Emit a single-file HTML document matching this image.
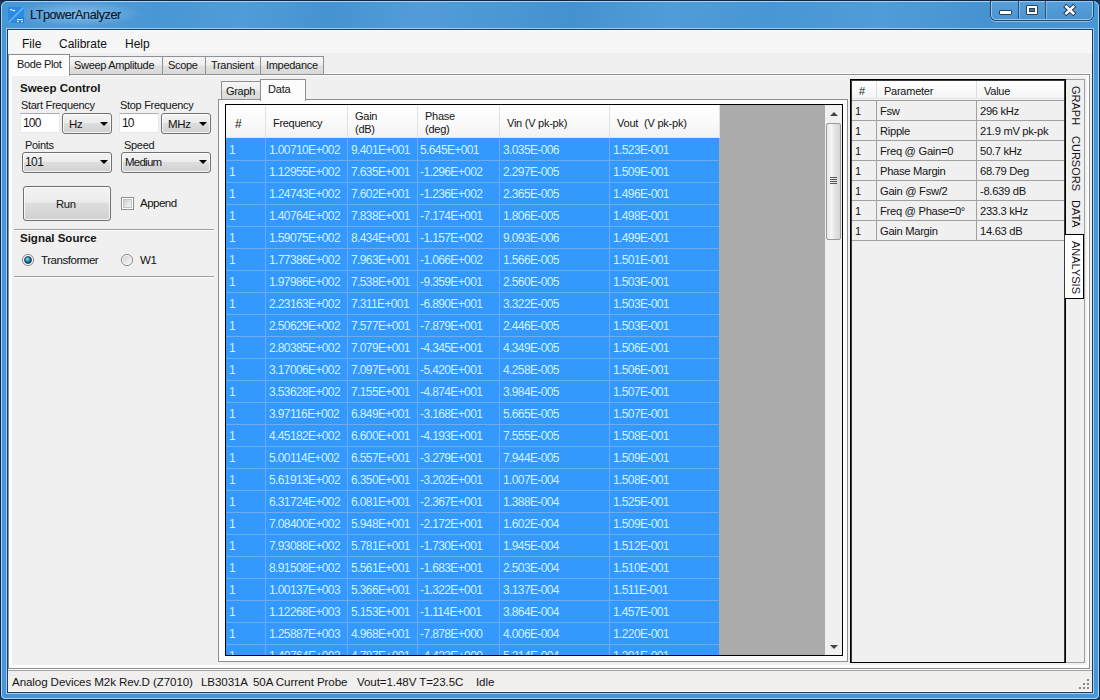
<!DOCTYPE html>
<html><head><meta charset="utf-8">
<style>
*{box-sizing:border-box;margin:0;padding:0}
html,body{width:1100px;height:700px;overflow:hidden;background:#1d4166}
body{position:relative;font-family:"Liberation Sans",sans-serif;font-size:12px;color:#000}
.a{position:absolute}
.t{position:absolute;white-space:pre;line-height:1}
.tab{border:1px solid #8d9097;border-bottom:none;background:linear-gradient(#f6f6f6 0,#eeeeee 45%,#e0e0e0 55%,#d9d9d9 100%)}
.ui{font-size:11px;letter-spacing:-0.3px;color:#151515}
.bold{font-weight:bold;font-size:11.5px;color:#151515;letter-spacing:0px}
.tb{background:#fff;border:1px solid #e3e9ef;border-top-color:#abadb3}
.cb{border:1px solid #707070;border-radius:3px;background:linear-gradient(#f3f3f3 0,#ececec 45%,#dddddd 50%,#d0d0d0 100%);box-shadow:inset 0 0 0 1px rgba(255,255,255,.75)}
.arr{width:0;height:0;border-left:4px solid transparent;border-right:4px solid transparent;border-top:4px solid #000}
.hd{font-size:11px;letter-spacing:-0.25px;color:#151515}
.c{font-size:12px;letter-spacing:-0.62px;color:#cdf3ff}
.pd{font-size:11.2px;letter-spacing:-0.3px;color:#151515}
.vt{font-size:11px;color:#151515;writing-mode:vertical-rl;line-height:1}
.mi{font-size:12px;color:#111}
</style></head><body>
<div class="a " style="left:0px;top:0px;width:1100px;height:700px;background:#4896d5;border:1px solid #0c2747;border-radius:7px 7px 5px 5px"></div>
<div class="a " style="left:2px;top:2px;width:1096px;height:26px;background:linear-gradient(100deg,rgba(255,255,255,0) 0,rgba(255,255,255,.06) 8%,rgba(255,255,255,0) 14%,rgba(255,255,255,.05) 22%,rgba(0,40,90,.03) 30%,rgba(255,255,255,.06) 38%,rgba(0,40,90,.04) 52%,rgba(255,255,255,.05) 61%,rgba(255,255,255,0) 70%,rgba(255,255,255,.05) 80%,rgba(0,40,90,.03) 90%,rgba(255,255,255,0) 100%);border-radius:5px 5px 0 0"></div>
<div class="a " style="left:1px;top:1px;width:1098px;height:698px;border:1px solid #a6d2f6;border-radius:6px 6px 4px 4px"></div>
<div class="a " style="left:6px;top:28px;width:1088px;height:666px;border:1px solid #a0d0f8"></div>
<div class="a " style="left:7px;top:29px;width:1086px;height:664px;background:#f0f0f0;border:1px solid #1f3a58"></div>
<div class="a " style="left:14px;top:2px;width:130px;height:24px;background:radial-gradient(ellipse 50% 50% at 50% 50%,rgba(190,228,255,.45),rgba(190,228,255,0) 100%)"></div>
<svg class="a" style="left:8px;top:7px" width="16" height="16" viewBox="0 0 16 16">
<rect x="0" y="0" width="16" height="16" fill="#2b8be2"/>
<path d="M0.5 15.5 L15.5 0.5" stroke="#6cbaf7" stroke-width="1.3"/>
<path d="M2 3.2 q1.3 -1.2 2.6 0 t2.6 0" stroke="#d8f0ff" fill="none" stroke-width="1.1"/>
<rect x="9" y="11" width="7" height="5" fill="#1f78c8"/>
<rect x="9" y="12" width="6" height="1.2" fill="#c8f8ff"/>
<rect x="9" y="14" width="2" height="1.2" fill="#c8f8ff"/>
<rect x="13" y="14" width="2" height="1.2" fill="#c8f8ff"/>
</svg>
<div class="t " style="left:30px;top:9px;font-size:12.6px;letter-spacing:-0.42px;color:#08182a;-webkit-text-stroke:0.15px #08182a">LTpowerAnalyzer</div>
<div class="a" style="left:990px;top:0;width:104px;height:21px;border:1px solid #24476b;border-top:none;border-radius:0 0 6px 6px;background:linear-gradient(#57a0da,#4b94d0);box-shadow:0 1px 0 rgba(170,215,250,.7)">
<div class="a" style="left:0;top:1px;right:0;bottom:0;border:1px solid rgba(175,215,248,.75);border-radius:0 0 5px 5px"></div>
<div class="a" style="left:27px;top:1px;width:1px;height:18px;background:#2d5277;box-shadow:1px 0 0 rgba(175,215,248,.5)"></div>
<div class="a" style="left:54px;top:1px;width:1px;height:18px;background:#2d5277;box-shadow:1px 0 0 rgba(175,215,248,.5)"></div>
<div class="a" style="left:8px;top:10px;width:13px;height:5px;background:#fff;border:1px solid #2a4058;border-radius:1px"></div>
<div class="a" style="left:35px;top:5px;width:12px;height:10px;background:#fff;border:1px solid #2a4058;border-radius:1px"><div class="a" style="left:2px;top:2px;width:6px;height:4px;background:#4d7396;border:1px solid #2a4058"></div></div>
<svg class="a" style="left:72px;top:4px" width="14" height="12" viewBox="0 0 14 12"><path d="M3.3 2.8 L10.2 9.2 M10.2 2.8 L3.3 9.2" stroke="#203a55" stroke-width="4.4" stroke-linecap="square"/><path d="M3.3 2.8 L10.2 9.2 M10.2 2.8 L3.3 9.2" stroke="#fff" stroke-width="2.6" stroke-linecap="square"/></svg>
</div>
<div class="a " style="left:0px;top:0px;width:1100px;height:1px;background:#0c2747;border-radius:7px 7px 0 0"></div>
<div class="a " style="left:8px;top:30px;width:1084px;height:44px;background:linear-gradient(#fcfdfe 0,#fcfdfe 1px,#f5f5f5 1px,#f7f7f7 23px,#efefef 23px,#efefef 43px,#fbfbfb 43px)"></div>
<div class="t mi" style="left:22px;top:38px;">File</div>
<div class="t mi" style="left:59px;top:38px;">Calibrate</div>
<div class="t mi" style="left:125px;top:38px;">Help</div>
<div class="a " style="left:8px;top:74px;width:1082px;height:595px;border:1px solid #8e8f92;background:#fcfcfc"></div>
<div class="a tab" style="left:69px;top:56px;width:94px;height:18px;"></div>
<div class="a tab" style="left:162px;top:56px;width:44px;height:18px;"></div>
<div class="a tab" style="left:205px;top:56px;width:56px;height:18px;"></div>
<div class="a tab" style="left:260px;top:56px;width:64px;height:18px;"></div>
<div class="t ui" style="left:74px;top:60px;letter-spacing:-0.32px">Sweep Amplitude</div>
<div class="t ui" style="left:168px;top:60px;">Scope</div>
<div class="t ui" style="left:211px;top:60px;">Transient</div>
<div class="t ui" style="left:266px;top:60px;">Impedance</div>
<div class="a " style="left:8px;top:54px;width:62px;height:22px;border:1px solid #8e8f92;border-bottom:none;background:#fcfcfc"></div>
<div class="t ui" style="left:17px;top:59px;letter-spacing:-0.35px">Bode Plot</div>
<div class="a " style="left:12px;top:76px;width:1075px;height:589px;background:#f0f0f0"></div>
<div class="a " style="left:8px;top:669px;width:1084px;height:1px;background:#fcfcfc"></div>
<div class="a " style="left:8px;top:670px;width:1084px;height:1px;background:#a0a0a0"></div>
<div class="a " style="left:8px;top:671px;width:1084px;height:20px;background:#f0efed"></div>
<div class="a " style="left:8px;top:691px;width:1084px;height:1px;background:#fbfbfb"></div>
<div class="t " style="left:12px;top:676px;font-size:11.6px;letter-spacing:-0.1px;color:#151515">Analog Devices M2k Rev.D (Z7010)</div>
<div class="t " style="left:201px;top:676px;font-size:11.6px;letter-spacing:-0.1px;color:#151515">LB3031A</div>
<div class="t " style="left:253px;top:676px;font-size:11.6px;letter-spacing:-0.1px;color:#151515">50A Current Probe</div>
<div class="t " style="left:357px;top:676px;font-size:11.6px;letter-spacing:-0.1px;color:#151515">Vout=1.48V T=23.5C</div>
<div class="t " style="left:476px;top:676px;font-size:11.6px;letter-spacing:-0.1px;color:#151515">Idle</div>
<div class="a " style="left:1087px;top:679px;width:2px;height:2px;background:#8a8a8a"></div>
<div class="a " style="left:1083px;top:683px;width:2px;height:2px;background:#8a8a8a"></div>
<div class="a " style="left:1087px;top:683px;width:2px;height:2px;background:#8a8a8a"></div>
<div class="a " style="left:1079px;top:687px;width:2px;height:2px;background:#8a8a8a"></div>
<div class="a " style="left:1083px;top:687px;width:2px;height:2px;background:#8a8a8a"></div>
<div class="a " style="left:1087px;top:687px;width:2px;height:2px;background:#8a8a8a"></div>
<div class="t bold" style="left:20px;top:83px;">Sweep Control</div>
<div class="t ui" style="left:21px;top:100px;">Start Frequency</div>
<div class="t ui" style="left:120px;top:100px;">Stop Frequency</div>
<div class="a tb" style="left:20px;top:113px;width:40px;height:20px;"></div>
<div class="t " style="left:23px;top:117px;font-size:12px;letter-spacing:-0.85px;color:#151515">100</div>
<div class="a cb" style="left:62px;top:113px;width:50px;height:21px;"></div>
<div class="t " style="left:69px;top:119px;font-size:11.5px;letter-spacing:-0.3px;color:#151515">Hz</div>
<div class="a arr" style="left:100px;top:122px;width:0px;height:0px;"></div>
<div class="a tb" style="left:119px;top:113px;width:40px;height:20px;"></div>
<div class="t " style="left:122px;top:117px;font-size:12px;letter-spacing:-0.85px;color:#151515">10</div>
<div class="a cb" style="left:161px;top:113px;width:50px;height:21px;"></div>
<div class="t " style="left:168px;top:119px;font-size:11.5px;letter-spacing:-0.3px;color:#151515">MHz</div>
<div class="a arr" style="left:199px;top:122px;width:0px;height:0px;"></div>
<div class="t ui" style="left:25px;top:140px;">Points</div>
<div class="t ui" style="left:124px;top:140px;">Speed</div>
<div class="a cb" style="left:22px;top:152px;width:90px;height:21px;"></div>
<div class="t " style="left:25px;top:156px;font-size:12px;letter-spacing:-0.6px;color:#151515">101</div>
<div class="a arr" style="left:100px;top:160px;width:0px;height:0px;"></div>
<div class="a cb" style="left:121px;top:152px;width:90px;height:21px;"></div>
<div class="t " style="left:125px;top:157px;font-size:11.5px;letter-spacing:-0.75px;color:#151515">Medium</div>
<div class="a arr" style="left:199px;top:160px;width:0px;height:0px;"></div>
<div class="a cb" style="left:23px;top:186px;width:88px;height:35px;"></div>
<div class="t ui" style="left:56px;top:199px;font-size:11.3px">Run</div>
<div class="a " style="left:121px;top:197px;width:13px;height:13px;border:1px solid #8e8f8f;background:#fff"></div>
<div class="a " style="left:123px;top:199px;width:9px;height:9px;border:1px solid #c4c4c4;background:linear-gradient(135deg,#cfcfcf,#f6f6f6)"></div>
<div class="t " style="left:140px;top:198px;font-size:11.5px;letter-spacing:-0.5px;color:#111">Append</div>
<div class="a " style="left:14px;top:229px;width:200px;height:1px;background:#a0a0a0;box-shadow:0 1px 0 #fff"></div>
<div class="t bold" style="left:20px;top:233px;">Signal Source</div>
<svg class="a" style="left:21px;top:253px" width="14" height="14" viewBox="0 0 14 14"><defs><radialGradient id="rg" cx=".42" cy=".38" r=".65"><stop offset="0" stop-color="#9eeefa"/><stop offset=".45" stop-color="#2b8aa8"/><stop offset="1" stop-color="#0b3d55"/></radialGradient></defs><circle cx="7" cy="7" r="5.6" fill="#f6f6f6" stroke="#8a8a8a" stroke-width="1"/><circle cx="7" cy="7" r="3.5" fill="url(#rg)" stroke="#0d3a50" stroke-width=".8"/></svg>
<div class="t " style="left:41px;top:255px;font-size:11.5px;letter-spacing:-0.45px;color:#111">Transformer</div>
<svg class="a" style="left:120px;top:253px" width="14" height="14" viewBox="0 0 14 14"><defs><linearGradient id="lg" x1="0" y1="0" x2="1" y2="1"><stop offset="0" stop-color="#d0d0d0"/><stop offset="1" stop-color="#f8f8f8"/></linearGradient></defs><circle cx="7" cy="7" r="5.6" fill="#f6f6f6" stroke="#8a8a8a" stroke-width="1"/><circle cx="7" cy="7" r="4" fill="url(#lg)"/></svg>
<div class="t " style="left:140px;top:255px;font-size:11.5px;letter-spacing:-0.3px;color:#111">W1</div>
<div class="a " style="left:14px;top:276px;width:200px;height:1px;background:#a0a0a0;box-shadow:0 1px 0 #fff"></div>
<div class="a " style="left:218px;top:99px;width:630px;height:563px;border:1px solid #8e8f92;background:#fcfcfc"></div>
<div class="a tab" style="left:221px;top:81px;width:40px;height:18px;"></div>
<div class="t ui" style="left:226px;top:86px;">Graph</div>
<div class="a " style="left:260px;top:79px;width:46px;height:22px;border:1px solid #8e8f92;border-bottom:none;background:#fcfcfc"></div>
<div class="t ui" style="left:268px;top:84px;letter-spacing:-0.2px">Data</div>
<div class="a " style="left:225px;top:104px;width:618px;height:552px;border:1px solid #000;background:#ababab"></div>
<div class="a " style="left:226px;top:105px;width:494px;height:33px;background:linear-gradient(#fefefe,#fafafa 50%,#f2f2f2)"></div>
<div class="a " style="left:226px;top:137px;width:494px;height:1px;background:#e4e4e4"></div>
<div class="a " style="left:265px;top:105px;width:1px;height:32px;background:#e2e2e2"></div>
<div class="a " style="left:347px;top:105px;width:1px;height:32px;background:#e2e2e2"></div>
<div class="a " style="left:417px;top:105px;width:1px;height:32px;background:#e2e2e2"></div>
<div class="a " style="left:499px;top:105px;width:1px;height:32px;background:#e2e2e2"></div>
<div class="a " style="left:609px;top:105px;width:1px;height:32px;background:#e2e2e2"></div>
<div class="a " style="left:719px;top:105px;width:1px;height:32px;background:#e2e2e2"></div>
<div class="t hd" style="left:235px;top:118px;font-size:12px">#</div>
<div class="t hd" style="left:273px;top:118px;letter-spacing:-0.3px">Frequency</div>
<div class="t hd" style="left:355px;top:111px;">Gain</div>
<div class="t hd" style="left:355px;top:124px;">(dB)</div>
<div class="t hd" style="left:425px;top:111px;">Phase</div>
<div class="t hd" style="left:425px;top:124px;">(deg)</div>
<div class="t hd" style="left:507px;top:118px;">Vin (V pk-pk)</div>
<div class="t hd" style="left:617px;top:118px;letter-spacing:-0.2px">Vout  (V pk-pk)</div>
<div class="a " style="left:226px;top:138px;width:493px;height:517px;background:#3399ff"></div>
<div class="a " style="left:265px;top:138px;width:1px;height:517px;background:#6eabef"></div>
<div class="a " style="left:347px;top:138px;width:1px;height:517px;background:#6eabef"></div>
<div class="a " style="left:417px;top:138px;width:1px;height:517px;background:#6eabef"></div>
<div class="a " style="left:499px;top:138px;width:1px;height:517px;background:#6eabef"></div>
<div class="a " style="left:609px;top:138px;width:1px;height:517px;background:#6eabef"></div>
<div class="t c" style="left:229px;top:144px;">1</div>
<div class="t c" style="left:269px;top:144px;">1.00710E+002</div>
<div class="t c" style="left:351px;top:144px;">9.401E+001</div>
<div class="t c" style="left:420px;top:144px;">5.645E+001</div>
<div class="t c" style="left:503px;top:144px;">3.035E-006</div>
<div class="t c" style="left:613px;top:144px;">1.523E-001</div>
<div class="a " style="left:226px;top:160px;width:493px;height:1px;background:#6eabef"></div>
<div class="t c" style="left:229px;top:166px;">1</div>
<div class="t c" style="left:269px;top:166px;">1.12955E+002</div>
<div class="t c" style="left:351px;top:166px;">7.635E+001</div>
<div class="t c" style="left:420px;top:166px;">-1.296E+002</div>
<div class="t c" style="left:503px;top:166px;">2.297E-005</div>
<div class="t c" style="left:613px;top:166px;">1.509E-001</div>
<div class="a " style="left:226px;top:182px;width:493px;height:1px;background:#6eabef"></div>
<div class="t c" style="left:229px;top:188px;">1</div>
<div class="t c" style="left:269px;top:188px;">1.24743E+002</div>
<div class="t c" style="left:351px;top:188px;">7.602E+001</div>
<div class="t c" style="left:420px;top:188px;">-1.236E+002</div>
<div class="t c" style="left:503px;top:188px;">2.365E-005</div>
<div class="t c" style="left:613px;top:188px;">1.496E-001</div>
<div class="a " style="left:226px;top:204px;width:493px;height:1px;background:#6eabef"></div>
<div class="t c" style="left:229px;top:210px;">1</div>
<div class="t c" style="left:269px;top:210px;">1.40764E+002</div>
<div class="t c" style="left:351px;top:210px;">7.838E+001</div>
<div class="t c" style="left:420px;top:210px;">-7.174E+001</div>
<div class="t c" style="left:503px;top:210px;">1.806E-005</div>
<div class="t c" style="left:613px;top:210px;">1.498E-001</div>
<div class="a " style="left:226px;top:226px;width:493px;height:1px;background:#6eabef"></div>
<div class="t c" style="left:229px;top:232px;">1</div>
<div class="t c" style="left:269px;top:232px;">1.59075E+002</div>
<div class="t c" style="left:351px;top:232px;">8.434E+001</div>
<div class="t c" style="left:420px;top:232px;">-1.157E+002</div>
<div class="t c" style="left:503px;top:232px;">9.093E-006</div>
<div class="t c" style="left:613px;top:232px;">1.499E-001</div>
<div class="a " style="left:226px;top:248px;width:493px;height:1px;background:#6eabef"></div>
<div class="t c" style="left:229px;top:254px;">1</div>
<div class="t c" style="left:269px;top:254px;">1.77386E+002</div>
<div class="t c" style="left:351px;top:254px;">7.963E+001</div>
<div class="t c" style="left:420px;top:254px;">-1.066E+002</div>
<div class="t c" style="left:503px;top:254px;">1.566E-005</div>
<div class="t c" style="left:613px;top:254px;">1.501E-001</div>
<div class="a " style="left:226px;top:270px;width:493px;height:1px;background:#6eabef"></div>
<div class="t c" style="left:229px;top:276px;">1</div>
<div class="t c" style="left:269px;top:276px;">1.97986E+002</div>
<div class="t c" style="left:351px;top:276px;">7.538E+001</div>
<div class="t c" style="left:420px;top:276px;">-9.359E+001</div>
<div class="t c" style="left:503px;top:276px;">2.560E-005</div>
<div class="t c" style="left:613px;top:276px;">1.503E-001</div>
<div class="a " style="left:226px;top:292px;width:493px;height:1px;background:#6eabef"></div>
<div class="t c" style="left:229px;top:298px;">1</div>
<div class="t c" style="left:269px;top:298px;">2.23163E+002</div>
<div class="t c" style="left:351px;top:298px;">7.311E+001</div>
<div class="t c" style="left:420px;top:298px;">-6.890E+001</div>
<div class="t c" style="left:503px;top:298px;">3.322E-005</div>
<div class="t c" style="left:613px;top:298px;">1.503E-001</div>
<div class="a " style="left:226px;top:314px;width:493px;height:1px;background:#6eabef"></div>
<div class="t c" style="left:229px;top:320px;">1</div>
<div class="t c" style="left:269px;top:320px;">2.50629E+002</div>
<div class="t c" style="left:351px;top:320px;">7.577E+001</div>
<div class="t c" style="left:420px;top:320px;">-7.879E+001</div>
<div class="t c" style="left:503px;top:320px;">2.446E-005</div>
<div class="t c" style="left:613px;top:320px;">1.503E-001</div>
<div class="a " style="left:226px;top:336px;width:493px;height:1px;background:#6eabef"></div>
<div class="t c" style="left:229px;top:342px;">1</div>
<div class="t c" style="left:269px;top:342px;">2.80385E+002</div>
<div class="t c" style="left:351px;top:342px;">7.079E+001</div>
<div class="t c" style="left:420px;top:342px;">-4.345E+001</div>
<div class="t c" style="left:503px;top:342px;">4.349E-005</div>
<div class="t c" style="left:613px;top:342px;">1.506E-001</div>
<div class="a " style="left:226px;top:358px;width:493px;height:1px;background:#6eabef"></div>
<div class="t c" style="left:229px;top:364px;">1</div>
<div class="t c" style="left:269px;top:364px;">3.17006E+002</div>
<div class="t c" style="left:351px;top:364px;">7.097E+001</div>
<div class="t c" style="left:420px;top:364px;">-5.420E+001</div>
<div class="t c" style="left:503px;top:364px;">4.258E-005</div>
<div class="t c" style="left:613px;top:364px;">1.506E-001</div>
<div class="a " style="left:226px;top:380px;width:493px;height:1px;background:#6eabef"></div>
<div class="t c" style="left:229px;top:386px;">1</div>
<div class="t c" style="left:269px;top:386px;">3.53628E+002</div>
<div class="t c" style="left:351px;top:386px;">7.155E+001</div>
<div class="t c" style="left:420px;top:386px;">-4.874E+001</div>
<div class="t c" style="left:503px;top:386px;">3.984E-005</div>
<div class="t c" style="left:613px;top:386px;">1.507E-001</div>
<div class="a " style="left:226px;top:402px;width:493px;height:1px;background:#6eabef"></div>
<div class="t c" style="left:229px;top:408px;">1</div>
<div class="t c" style="left:269px;top:408px;">3.97116E+002</div>
<div class="t c" style="left:351px;top:408px;">6.849E+001</div>
<div class="t c" style="left:420px;top:408px;">-3.168E+001</div>
<div class="t c" style="left:503px;top:408px;">5.665E-005</div>
<div class="t c" style="left:613px;top:408px;">1.507E-001</div>
<div class="a " style="left:226px;top:424px;width:493px;height:1px;background:#6eabef"></div>
<div class="t c" style="left:229px;top:430px;">1</div>
<div class="t c" style="left:269px;top:430px;">4.45182E+002</div>
<div class="t c" style="left:351px;top:430px;">6.600E+001</div>
<div class="t c" style="left:420px;top:430px;">-4.193E+001</div>
<div class="t c" style="left:503px;top:430px;">7.555E-005</div>
<div class="t c" style="left:613px;top:430px;">1.508E-001</div>
<div class="a " style="left:226px;top:446px;width:493px;height:1px;background:#6eabef"></div>
<div class="t c" style="left:229px;top:452px;">1</div>
<div class="t c" style="left:269px;top:452px;">5.00114E+002</div>
<div class="t c" style="left:351px;top:452px;">6.557E+001</div>
<div class="t c" style="left:420px;top:452px;">-3.279E+001</div>
<div class="t c" style="left:503px;top:452px;">7.944E-005</div>
<div class="t c" style="left:613px;top:452px;">1.509E-001</div>
<div class="a " style="left:226px;top:468px;width:493px;height:1px;background:#6eabef"></div>
<div class="t c" style="left:229px;top:474px;">1</div>
<div class="t c" style="left:269px;top:474px;">5.61913E+002</div>
<div class="t c" style="left:351px;top:474px;">6.350E+001</div>
<div class="t c" style="left:420px;top:474px;">-3.202E+001</div>
<div class="t c" style="left:503px;top:474px;">1.007E-004</div>
<div class="t c" style="left:613px;top:474px;">1.508E-001</div>
<div class="a " style="left:226px;top:490px;width:493px;height:1px;background:#6eabef"></div>
<div class="t c" style="left:229px;top:496px;">1</div>
<div class="t c" style="left:269px;top:496px;">6.31724E+002</div>
<div class="t c" style="left:351px;top:496px;">6.081E+001</div>
<div class="t c" style="left:420px;top:496px;">-2.367E+001</div>
<div class="t c" style="left:503px;top:496px;">1.388E-004</div>
<div class="t c" style="left:613px;top:496px;">1.525E-001</div>
<div class="a " style="left:226px;top:512px;width:493px;height:1px;background:#6eabef"></div>
<div class="t c" style="left:229px;top:518px;">1</div>
<div class="t c" style="left:269px;top:518px;">7.08400E+002</div>
<div class="t c" style="left:351px;top:518px;">5.948E+001</div>
<div class="t c" style="left:420px;top:518px;">-2.172E+001</div>
<div class="t c" style="left:503px;top:518px;">1.602E-004</div>
<div class="t c" style="left:613px;top:518px;">1.509E-001</div>
<div class="a " style="left:226px;top:534px;width:493px;height:1px;background:#6eabef"></div>
<div class="t c" style="left:229px;top:540px;">1</div>
<div class="t c" style="left:269px;top:540px;">7.93088E+002</div>
<div class="t c" style="left:351px;top:540px;">5.781E+001</div>
<div class="t c" style="left:420px;top:540px;">-1.730E+001</div>
<div class="t c" style="left:503px;top:540px;">1.945E-004</div>
<div class="t c" style="left:613px;top:540px;">1.512E-001</div>
<div class="a " style="left:226px;top:556px;width:493px;height:1px;background:#6eabef"></div>
<div class="t c" style="left:229px;top:562px;">1</div>
<div class="t c" style="left:269px;top:562px;">8.91508E+002</div>
<div class="t c" style="left:351px;top:562px;">5.561E+001</div>
<div class="t c" style="left:420px;top:562px;">-1.683E+001</div>
<div class="t c" style="left:503px;top:562px;">2.503E-004</div>
<div class="t c" style="left:613px;top:562px;">1.510E-001</div>
<div class="a " style="left:226px;top:578px;width:493px;height:1px;background:#6eabef"></div>
<div class="t c" style="left:229px;top:584px;">1</div>
<div class="t c" style="left:269px;top:584px;">1.00137E+003</div>
<div class="t c" style="left:351px;top:584px;">5.366E+001</div>
<div class="t c" style="left:420px;top:584px;">-1.322E+001</div>
<div class="t c" style="left:503px;top:584px;">3.137E-004</div>
<div class="t c" style="left:613px;top:584px;">1.511E-001</div>
<div class="a " style="left:226px;top:600px;width:493px;height:1px;background:#6eabef"></div>
<div class="t c" style="left:229px;top:606px;">1</div>
<div class="t c" style="left:269px;top:606px;">1.12268E+003</div>
<div class="t c" style="left:351px;top:606px;">5.153E+001</div>
<div class="t c" style="left:420px;top:606px;">-1.114E+001</div>
<div class="t c" style="left:503px;top:606px;">3.864E-004</div>
<div class="t c" style="left:613px;top:606px;">1.457E-001</div>
<div class="a " style="left:226px;top:622px;width:493px;height:1px;background:#6eabef"></div>
<div class="t c" style="left:229px;top:628px;">1</div>
<div class="t c" style="left:269px;top:628px;">1.25887E+003</div>
<div class="t c" style="left:351px;top:628px;">4.968E+001</div>
<div class="t c" style="left:420px;top:628px;">-7.878E+000</div>
<div class="t c" style="left:503px;top:628px;">4.006E-004</div>
<div class="t c" style="left:613px;top:628px;">1.220E-001</div>
<div class="a " style="left:226px;top:644px;width:493px;height:1px;background:#6eabef"></div>
<div class="t c" style="left:229px;top:650px;">1</div>
<div class="t c" style="left:269px;top:650px;">1.40764E+003</div>
<div class="t c" style="left:351px;top:650px;">4.787E+001</div>
<div class="t c" style="left:420px;top:650px;">-4.423E+000</div>
<div class="t c" style="left:503px;top:650px;">5.214E-004</div>
<div class="t c" style="left:613px;top:650px;">1.201E-001</div>
<div class="a " style="left:225px;top:655px;width:618px;height:1px;background:#000"></div>
<div class="a " style="left:219px;top:656px;width:628px;height:5px;background:#fcfcfc"></div>
<div class="a " style="left:825px;top:105px;width:17px;height:550px;background:#f0f0f0"></div>
<div class="a " style="left:826px;top:123px;width:15px;height:117px;border:1px solid #9a9a9a;border-radius:2px;background:linear-gradient(to right,#e8e8e8,#f6f6f6 35%,#e6e6e6 55%,#d6d6d6)"></div>
<div class="a " style="left:830px;top:177px;width:7px;height:1px;background:#555;box-shadow:0 2px 0 #555,0 4px 0 #555,0 6px 0 #555"></div>
<div class="a " style="left:830px;top:112px;width:0px;height:0px;border-left:4px solid transparent;border-right:4px solid transparent;border-bottom:4px solid #444"></div>
<div class="a " style="left:830px;top:645px;width:0px;height:0px;border-left:4px solid transparent;border-right:4px solid transparent;border-top:4px solid #444"></div>
<div class="a " style="left:850px;top:79px;width:216px;height:584px;border:1px solid #000;background:#f0f0f0"></div>
<div class="a " style="left:851px;top:80px;width:214px;height:582px;border:1px solid #3a3a3a;border-bottom:none"></div>
<div class="a " style="left:852px;top:81px;width:212px;height:19px;background:linear-gradient(#fefefe,#fafafa 50%,#f2f2f2)"></div>
<div class="a " style="left:852px;top:98px;width:212px;height:1px;background:#e6e6e6"></div>
<div class="a " style="left:876px;top:81px;width:1px;height:18px;background:#e0e0e0"></div>
<div class="a " style="left:976px;top:81px;width:1px;height:18px;background:#e0e0e0"></div>
<div class="t hd" style="left:859px;top:86px;">#</div>
<div class="t hd" style="left:884px;top:86px;">Parameter</div>
<div class="t hd" style="left:984px;top:86px;">Value</div>
<div class="a " style="left:852px;top:100px;width:212px;height:1px;background:#a0a0a0"></div>
<div class="t pd" style="left:855px;top:106px;">1</div>
<div class="t pd" style="left:880px;top:106px;">Fsw</div>
<div class="t pd" style="left:980px;top:106px;">296 kHz</div>
<div class="a " style="left:852px;top:120px;width:212px;height:1px;background:#a0a0a0"></div>
<div class="t pd" style="left:855px;top:126px;">1</div>
<div class="t pd" style="left:880px;top:126px;">Ripple</div>
<div class="t pd" style="left:980px;top:126px;">21.9 mV pk-pk</div>
<div class="a " style="left:852px;top:140px;width:212px;height:1px;background:#a0a0a0"></div>
<div class="t pd" style="left:855px;top:146px;">1</div>
<div class="t pd" style="left:880px;top:146px;">Freq @ Gain=0</div>
<div class="t pd" style="left:980px;top:146px;">50.7 kHz</div>
<div class="a " style="left:852px;top:160px;width:212px;height:1px;background:#a0a0a0"></div>
<div class="t pd" style="left:855px;top:166px;">1</div>
<div class="t pd" style="left:880px;top:166px;">Phase Margin</div>
<div class="t pd" style="left:980px;top:166px;">68.79 Deg</div>
<div class="a " style="left:852px;top:180px;width:212px;height:1px;background:#a0a0a0"></div>
<div class="t pd" style="left:855px;top:186px;">1</div>
<div class="t pd" style="left:880px;top:186px;">Gain @ Fsw/2</div>
<div class="t pd" style="left:980px;top:186px;">-8.639 dB</div>
<div class="a " style="left:852px;top:200px;width:212px;height:1px;background:#a0a0a0"></div>
<div class="t pd" style="left:855px;top:206px;">1</div>
<div class="t pd" style="left:880px;top:206px;">Freq @ Phase=0°</div>
<div class="t pd" style="left:980px;top:206px;">233.3 kHz</div>
<div class="a " style="left:852px;top:220px;width:212px;height:1px;background:#a0a0a0"></div>
<div class="t pd" style="left:855px;top:226px;">1</div>
<div class="t pd" style="left:880px;top:226px;">Gain Margin</div>
<div class="t pd" style="left:980px;top:226px;">14.63 dB</div>
<div class="a " style="left:852px;top:240px;width:212px;height:1px;background:#a0a0a0"></div>
<div class="a " style="left:876px;top:100px;width:1px;height:141px;background:#a0a0a0"></div>
<div class="a " style="left:976px;top:100px;width:1px;height:141px;background:#a0a0a0"></div>
<div class="a " style="left:1066px;top:79px;width:19px;height:584px;border:1px solid #a0a0a0;border-left:none;background:#f0f0f0"></div>
<div class="t vt" style="left:1070px;top:86px;">GRAPH</div>
<div class="t vt" style="left:1070px;top:136px;">CURSORS</div>
<div class="t vt" style="left:1070px;top:200px;">DATA</div>
<div class="a " style="left:1065px;top:234px;width:19px;height:65px;border:1px solid #000;border-left:none;background:#fff"></div>
<div class="t vt" style="left:1070px;top:241px;">ANALYSIS</div>
</body></html>
